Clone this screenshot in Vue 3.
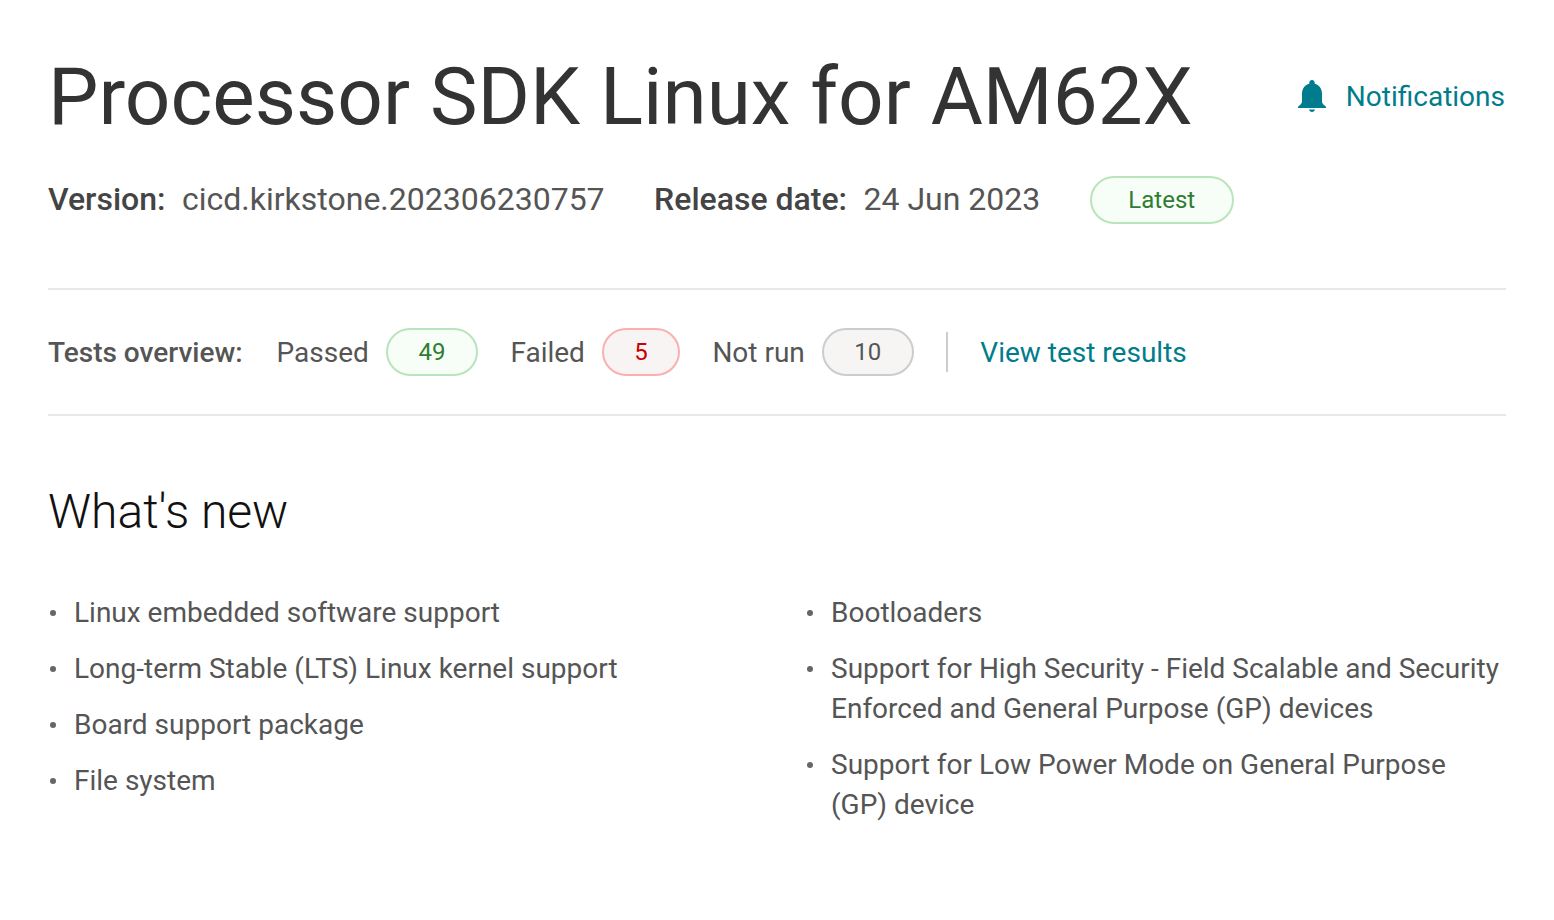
<template>
  <div class="page">
    <header class="top">
      <h1 class="title">Processor SDK Linux for AM62X</h1>
      <a class="notify">
        <svg class="bell" viewBox="0 0 28 32" width="28" height="32">
          <path d="M14 0c1.5 0 2.6 1.1 2.7 2.7v1C21.600 5 24 9 24 14v7.500c0 1.800 1.300 3 4 5.300V28H0v-1.200c2.700-2.300 4-3.500 4-5.300V14c0-5 2.400-9 7.300-10.300v-1C11.400 1.100 12.500 0 14 0z"/>
          <path d="M11 29.500h6c-.3 1.500-1.500 2.500-3 2.500s-2.700-1-3-2.500z"/>
        </svg>
        <span>Notifications</span>
      </a>
    </header>

    <div class="meta">
      <span class="meta-item"><b>Version:</b><span>cicd.kirkstone.202306230757</span></span>
      <span class="meta-item"><b>Release date:</b><span>24 Jun 2023</span></span>
      <span class="pill latest">Latest</span>
    </div>

    <div class="tests">
      <b class="tests-label">Tests overview:</b>
      <div v-for="t in tests" :key="t.label" class="test">
        <span>{{ t.label }}</span>
        <span class="pill count" :class="t.kind">{{ t.count }}</span>
      </div>
      <span class="divider"></span>
      <a class="results">View test results</a>
    </div>

    <h2 class="new-title">What's new</h2>

    <div class="columns">
      <ul v-for="(col, i) in columns" :key="i" class="list">
        <li v-for="item in col" :key="item">{{ item }}</li>
      </ul>
    </div>
  </div>
</template>

<script setup>
const tests = [
  { label: 'Passed', count: 49, kind: 'green' },
  { label: 'Failed', count: 5, kind: 'red' },
  { label: 'Not run', count: 10, kind: 'grey' }
]

const columns = [
  [
    'Linux embedded software support',
    'Long-term Stable (LTS) Linux kernel support',
    'Board support package',
    'File system'
  ],
  [
    'Bootloaders',
    'Support for High Security - Field Scalable and Security Enforced and General Purpose (GP) devices',
    'Support for Low Power Mode on General Purpose (GP) device'
  ]
]
</script>

<style>
html, body {
  background: #fff;
}
</style>

<style scoped>
.page {
  box-sizing: border-box;
  width: 1554px;
  height: 920px;
  padding: 48px 48px 0;
  font-family: Roboto, "Liberation Sans", sans-serif;
  color: #555;
  overflow: hidden;
}

.top {
  display: flex;
  justify-content: space-between;
  align-items: center;
  height: 96px;
}

.title {
  margin: 2px 0 0;
  font-size: 80px;
  line-height: 96px;
  font-weight: 400;
  color: #333;
}

.notify {
  display: flex;
  align-items: center;
  gap: 20px;
  margin-right: 1px;
  font-size: 28px;
  color: #007c8c;
}

.bell {
  fill: #007c8c;
}

.meta {
  display: flex;
  align-items: center;
  height: 48px;
  margin-top: 32px;
  font-size: 32px;
}

.meta-item {
  display: flex;
  gap: 16.5px;
  margin-right: 49.5px;
  margin-bottom: 2px;
}

.meta-item b {
  font-weight: 500;
  color: #444;
}

.tests-label {
  font-weight: 500;
  color: #555;
  margin-right: 34px;
}

.pill {
  box-sizing: border-box;
  display: inline-flex;
  align-items: center;
  justify-content: center;
  height: 48px;
  border: 2px solid;
  border-radius: 24px;
  font-size: 24px;
}

.latest {
  width: 144px;
  color: #2e7d32;
  border-color: #b9e4bc;
  background: #f6fef7;
}

.tests {
  display: flex;
  align-items: center;
  height: 124px;
  margin-top: 64px;
  border-top: 2px solid #e8e8e8;
  border-bottom: 2px solid #e8e8e8;
  font-size: 28px;
}

.test {
  display: flex;
  align-items: center;
  gap: 17px;
  margin-right: 32.5px;
}

.count {
  width: 92px;
}

.red.count {
  width: 78px;
}

.green {
  color: #2e7d32;
  border-color: #b9e4bc;
  background: #f6fef7;
}

.red {
  color: #cc0000;
  border-color: #fbb0b0;
  background: #f9f4f4;
}

.grey {
  color: #555;
  border-color: #ccc;
  background: #f6f5f3;
}

.divider {
  width: 2px;
  height: 40px;
  margin-right: 32px;
  background: #ccc;
}

.results {
  color: #007c8c;
}

.new-title {
  margin: 64px 0 0;
  font-size: 48px;
  line-height: 64px;
  font-weight: 300;
  color: #111;
}

.columns {
  display: grid;
  grid-template-columns: 757px 1fr;
  margin-top: 49px;
}

.list {
  margin: 0;
  padding: 0;
  list-style: none;
  font-size: 28px;
  line-height: 40px;
}

.list li {
  position: relative;
  padding-left: 26px;
  margin-bottom: 16px;
}

.list li::before {
  content: "";
  position: absolute;
  left: 2px;
  top: 17px;
  width: 6px;
  height: 6px;
  border-radius: 50%;
  background: #666;
}
</style>
